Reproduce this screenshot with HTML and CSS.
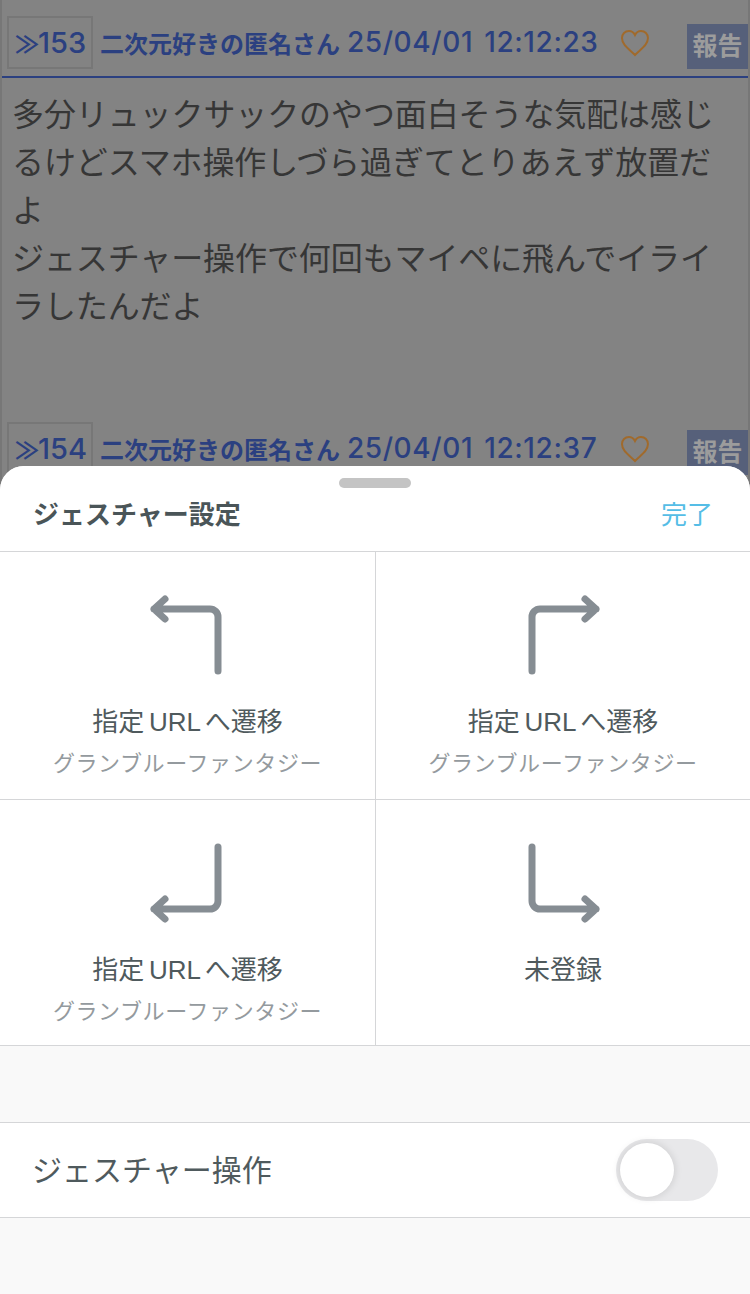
FILE: index.html
```html
<!DOCTYPE html>
<html lang="ja">
<head>
    <meta charset="UTF-8">
    <title>ジェスチャー設定</title>
    <link rel="stylesheet" href="styles.css">
</head>
<body>
    <div class="thread">
        <div class="post">
            <div class="post-head">
                <div class="post-num"><span class="mark">≫</span>153</div>
                <div class="post-meta">二次元好きの匿名さん<span class="post-date">25/04/01 12:12:23</span></div>
                <svg class="heart" viewBox="0 0 30 28"><path d="M15 26C9 20 2 16 2 9c0-4 3-7 7-7 3 0 5 2 6 4 1-2 3-4 6-4 4 0 7 3 7 7 0 7-7 11-13 17z"/></svg>
                <div class="report">報告</div>
            </div>
            <div class="post-body">多分リュックサックのやつ面白そうな気配は感じるけどスマホ操作しづら過ぎてとりあえず放置だよ<br>ジェスチャー操作で何回もマイペに飛んでイライラしたんだよ</div>
        </div>
        <div class="post">
            <div class="post-head">
                <div class="post-num"><span class="mark">≫</span>154</div>
                <div class="post-meta">二次元好きの匿名さん<span class="post-date">25/04/01 12:12:37</span></div>
                <svg class="heart" viewBox="0 0 30 28"><path d="M15 26C9 20 2 16 2 9c0-4 3-7 7-7 3 0 5 2 6 4 1-2 3-4 6-4 4 0 7 3 7 7 0 7-7 11-13 17z"/></svg>
                <div class="report">報告</div>
            </div>
        </div>
    </div>

    <div class="sheet">
        <div class="handle"></div>
        <div class="sheet-head">
            <h1>ジェスチャー設定</h1>
            <span class="done">完了</span>
        </div>

        <div class="gesture-grid">
            <div class="gesture">
                <svg class="arrow" viewBox="0 0 80 90"><path d="M70 81V27a8 8 0 0 0-8-8H6M17 9 6 19l11 10"/></svg>
                <div class="gesture-name">指定 URL へ遷移</div>
                <div class="gesture-sub">グランブルーファンタジー</div>
            </div>
            <div class="gesture">
                <svg class="arrow" viewBox="0 0 80 90"><path d="M9 81V27a8 8 0 0 1 8-8h56M62 9l11 10-11 10"/></svg>
                <div class="gesture-name">指定 URL へ遷移</div>
                <div class="gesture-sub">グランブルーファンタジー</div>
            </div>
            <div class="gesture">
                <svg class="arrow" viewBox="0 0 80 90"><path d="M70 9v54a8 8 0 0 1-8 8H6M17 61 6 71l11 10"/></svg>
                <div class="gesture-name">指定 URL へ遷移</div>
                <div class="gesture-sub">グランブルーファンタジー</div>
            </div>
            <div class="gesture">
                <svg class="arrow" viewBox="0 0 80 90"><path d="M9 9v54a8 8 0 0 0 8 8h56M62 61l11 10-11 10"/></svg>
                <div class="gesture-name">未登録</div>
            </div>
        </div>

        <div class="setting-row">
            <span class="setting-label">ジェスチャー操作</span>
            <div class="toggle"><div class="knob"></div></div>
        </div>
    </div>
</body>
</html>
```

FILE: styles.css
```css
* {
    margin: 0;
    padding: 0;
    box-sizing: border-box;
}

body {
    position: relative;
    width: 750px;
    height: 1294px;
    overflow: hidden;
    background: #838383;
    font-family: "Noto Sans CJK JP", "Noto Sans", sans-serif;
}

/* thread behind the sheet, colours already dimmed */
.post {
    height: 406px;
    border-left: 2px solid #777;
    border-right: 2px solid #777;
}

.post-head {
    display: flex;
    align-items: flex-start;
    height: 78px;
    padding: 16px 0 0 5px;
    border-bottom: 2px solid #2b4080;
    color: #2b4080;
}

.post-num {
    display: flex;
    align-items: center;
    width: 86px;
    height: 53px;
    padding: 0 0 1px 6px;
    border: 2px solid #777;
    font-family: Inter, "Noto Sans CJK JP", sans-serif;
    font-size: 29px;
    font-weight: 500;
    white-space: nowrap;
}

.mark {
    width: 23px;
    font-family: "Noto Sans CJK JP", sans-serif;
    font-size: 24px;
    font-weight: 700;
    letter-spacing: -4px;
}

.post-meta {
    display: flex;
    width: 521px;
    margin-left: 7px;
    font-size: 24px;
    line-height: 53px;
    font-weight: 700;
    white-space: nowrap;
}

.post-date {
    margin-left: 7px;
    font-family: Inter, sans-serif;
    font-size: 28px;
    font-weight: 500;
    letter-spacing: 0.6px;
    word-spacing: 3px;
}

.heart {
    width: 30px;
    height: 28px;
    margin-top: 13px;
    fill: none;
    stroke: #a06a2c;
    stroke-width: 2;
}

.report {
    width: 61px;
    height: 45px;
    margin: 8px 0 0 37px;
    background: #56607a;
    color: #9c9c9c;
    font-size: 25px;
    font-weight: 700;
    line-height: 41px;
    text-align: center;
}

.post-body {
    padding: 10px 16px 0 10px;
    font-size: 32px;
    letter-spacing: -0.1px;
    line-height: 48px;
    color: #363636;
}

/* bottom sheet */
.sheet {
    position: absolute;
    left: 0;
    top: 466px;
    width: 750px;
    height: 828px;
    background: #f9f9f9;
    border-radius: 24px 24px 0 0;
    overflow: hidden;
}

.handle {
    position: absolute;
    left: 339px;
    top: 12px;
    width: 72px;
    height: 10px;
    border-radius: 5px;
    background: #c4c4c4;
}

.sheet-head {
    display: flex;
    justify-content: space-between;
    align-items: center;
    height: 86px;
    padding: 7px 37px 0 33px;
    background: #fff;
    border-bottom: 1px solid #d5d6d8;
}

.sheet-head h1 {
    font-size: 26px;
    font-weight: 700;
    color: #4a5558;
}

.done {
    font-size: 26px;
    color: #55bde6;
}

.gesture-grid {
    display: grid;
    grid-template-columns: 376px 374px;
    grid-template-rows: 248px 246px;
    background: #fff;
}

.gesture {
    display: flex;
    flex-direction: column;
    align-items: center;
    padding-top: 38px;
    border-bottom: 1px solid #d5d6d8;
}

.gesture:nth-child(odd) {
    border-right: 1px solid #d5d6d8;
}

.arrow {
    width: 80px;
    height: 90px;
    fill: none;
    stroke: #868d93;
    stroke-width: 7;
    stroke-linecap: round;
    stroke-linejoin: round;
}

.gesture-name {
    margin-top: 23px;
    font-family: "Liberation Sans", "Noto Sans CJK JP", sans-serif;
    font-size: 26px;
    word-spacing: -2.5px;
    line-height: 38px;
    color: #4f5a5d;
}

.gesture-sub {
    margin-top: 1px;
    font-size: 22px;
    letter-spacing: 0.6px;
    line-height: 38px;
    color: #949a9e;
}

.setting-row {
    display: flex;
    justify-content: space-between;
    align-items: center;
    height: 96px;
    margin-top: 76px;
    padding: 0 32px;
    background: #fff;
    border-top: 1px solid #d5d6d8;
    border-bottom: 1px solid #d5d6d8;
    font-size: 30px;
    color: #4f5a5d;
}

.setting-label {
    margin-bottom: 5px;
}

.toggle {
    width: 102px;
    height: 62px;
    padding: 4px;
    border-radius: 31px;
    background: #e8e8ea;
}

.knob {
    width: 54px;
    height: 54px;
    border-radius: 50%;
    background: #fff;
    box-shadow: 0 0 8px rgba(0, 0, 0, 0.14);
}
```
